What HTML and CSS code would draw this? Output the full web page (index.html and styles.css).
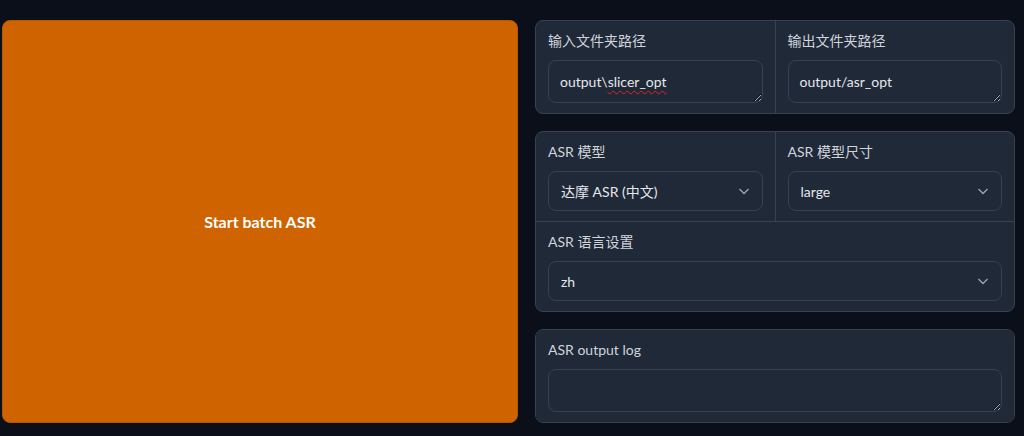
FILE: index.html
```html
<!DOCTYPE html>
<html lang="zh-CN">
<head>
  <meta charset="UTF-8" />
  <meta name="viewport" content="width=device-width, initial-scale=1.0"/>
  <title>ASR</title>
  <link rel="stylesheet" href="styles.css">
</head>
<body>

<div class="row">
  <button class="primary-btn">Start batch ASR</button>

  <div class="column">
    <!-- Folder paths -->
    <div class="form">
      <div class="form-row">
        <div class="block">
          <label>输入文件夹路径</label>
          <div class="textbox"><span>output\</span><span class="misspelled">slicer_opt</span></div>
        </div>
        <div class="block">
          <label>输出文件夹路径</label>
          <div class="textbox">output/asr_opt</div>
        </div>
      </div>
    </div>

    <!-- Model settings -->
    <div class="form">
      <div class="form-row">
        <div class="block">
          <label>ASR 模型</label>
          <div class="dropdown">
            <span>达摩 ASR (中文)</span>
            <svg width="12" height="12" viewBox="0 0 12 12"><path d="M1.5 4 L6 8.5 L10.5 4" fill="none" stroke="#9ca3af" stroke-width="1.4"/></svg>
          </div>
        </div>
        <div class="block">
          <label>ASR 模型尺寸</label>
          <div class="dropdown">
            <span>large</span>
            <svg width="12" height="12" viewBox="0 0 12 12"><path d="M1.5 4 L6 8.5 L10.5 4" fill="none" stroke="#9ca3af" stroke-width="1.4"/></svg>
          </div>
        </div>
      </div>
      <div class="form-row">
        <div class="block">
          <label>ASR 语言设置</label>
          <div class="dropdown">
            <span>zh</span>
            <svg width="12" height="12" viewBox="0 0 12 12"><path d="M1.5 4 L6 8.5 L10.5 4" fill="none" stroke="#9ca3af" stroke-width="1.4"/></svg>
          </div>
        </div>
      </div>
    </div>

    <!-- Log -->
    <div class="form">
      <div class="block">
        <label>ASR output log</label>
        <div class="textbox"></div>
      </div>
    </div>
  </div>
</div>

</body>
</html>
```

FILE: styles.css
```css
body {
  margin: 0;
  padding: 20px 9px 13px 2px;
  background-color: #0b0f19;
  color-scheme: dark;
  font-family: Lato, "Noto Sans CJK SC", sans-serif;
  color: #e5e7eb;
}

.row {
  display: grid;
  grid-template-columns: 516px 1fr;
  gap: 17px;
  height: 403px;
}

.primary-btn {
  background-color: #ce6300;
  border: 1px solid #b85500;
  border-radius: 8px;
  color: white;
  font-family: Lato, "Noto Sans CJK SC", sans-serif;
  font-size: 16px;
  font-weight: bold;
  cursor: pointer;
}

.column {
  display: flex;
  flex-direction: column;
  gap: 17px;
}

.form {
  background: #374151;
  border: 1px solid #374151;
  border-radius: 8px;
  overflow: hidden;
  display: flex;
  flex-direction: column;
  gap: 1px;
}

.form-row {
  display: flex;
  gap: 1px;
}

.block {
  flex: 1;
  background: #1f2937;
  padding: 10px 12px;
}

.block label {
  display: block;
  font-size: 14px;
  line-height: 20px;
  color: #d1d5db;
  margin-bottom: 9px;
}

.textbox {
  height: 43px;
  box-sizing: border-box;
  padding: 11px 11px;
  border: 1px solid #374151;
  border-radius: 8px;
  background: #1f2937;
  font-size: 14px;
  line-height: 20px;
  color: #e5e7eb;
  overflow: hidden;
  resize: vertical;
}

.misspelled {
  text-decoration: underline wavy #e02424;
  text-decoration-thickness: 1px;
  text-underline-offset: 3px;
}

.dropdown {
  height: 40px;
  box-sizing: border-box;
  padding: 0 12px;
  border: 1px solid #374151;
  border-radius: 8px;
  background: #1f2937;
  display: flex;
  align-items: center;
  justify-content: space-between;
  font-size: 14px;
  color: #e5e7eb;
}
```
